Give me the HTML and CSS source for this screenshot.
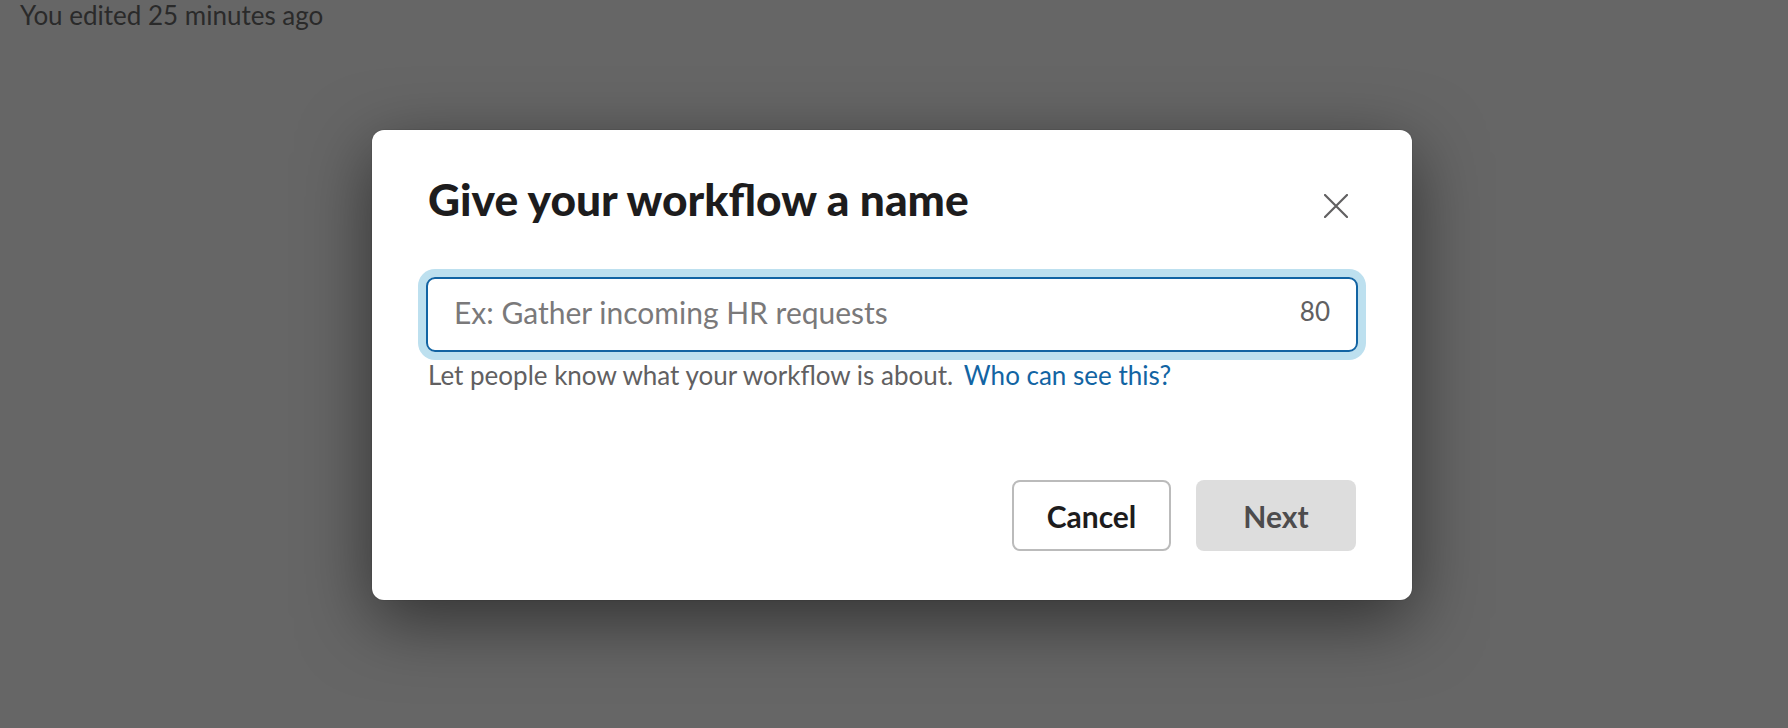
FILE: index.html
```html
<!DOCTYPE html>
<html lang="en">
<head>
<meta charset="utf-8">
<title>Give your workflow a name</title>
<link rel="stylesheet" href="styles.css">
</head>
<body>
<div class="page">
  <div class="edited">You edited 25 minutes ago</div>
</div>
<div class="overlay">
  <div class="modal" role="dialog" aria-labelledby="modal-title">
    <div class="modal-header">
      <h1 class="modal-title" id="modal-title">Give your workflow a name</h1>
      <button class="close-btn" type="button" aria-label="Close">
        <svg width="24" height="24" viewBox="0 0 24 24" aria-hidden="true">
          <path d="M1 1 L23 23 M23 1 L1 23" stroke="#616061" stroke-width="2.2" stroke-linecap="round" fill="none"/>
        </svg>
      </button>
    </div>
    <div class="field">
      <input class="field-input" type="text" placeholder="Ex: Gather incoming HR requests">
      <span class="field-count">80</span>
    </div>
    <p class="hint">Let people know what your workflow is about. <a class="hint-link" href="#">Who can see this?</a></p>
    <div class="modal-footer">
      <button class="btn btn-secondary" type="button">Cancel</button>
      <button class="btn btn-disabled" type="button">Next</button>
    </div>
  </div>
</div>
</body>
</html>
```

FILE: styles.css
```css
html, body {
  margin: 0;
  padding: 0;
}

body {
  width: 1788px;
  height: 728px;
  overflow: hidden;
  background: #666666;
  font-family: Lato, "Noto Sans", "Liberation Sans", sans-serif;
  position: relative;
}

.page {
  height: 728px;
}

.edited {
  padding: 0 0 0 20px;
  font-size: 26px;
  line-height: 31px;
  color: #2a2a2a;
}

.overlay {
  position: absolute;
  inset: 0;
  display: flex;
  align-items: center;
  justify-content: center;
  padding: 2px 4px 0 0;
}

.modal {
  width: 1040px;
  box-sizing: border-box;
  background: #ffffff;
  border-radius: 12px;
  padding: 43px 54px 49px;
  box-shadow: 0 0 0 1px rgba(0, 0, 0, 0.06), 0 20px 70px rgba(0, 0, 0, 0.52);
}

.modal-header {
  display: flex;
  align-items: flex-start;
  justify-content: space-between;
}

.modal-title {
  margin: 0 0 0 2px;
  font-size: 44.3px;
  line-height: 52px;
  font-weight: 900;
  color: #1d1c1d;
}

.close-btn {
  width: 44px;
  height: 44px;
  margin-top: 11px;
  padding: 0;
  border: none;
  background: transparent;
  display: flex;
  align-items: center;
  justify-content: center;
  cursor: pointer;
}

.field {
  margin-top: 49px;
  height: 75px;
  box-sizing: border-box;
  display: flex;
  align-items: center;
  border: 2px solid #1264a3;
  border-radius: 9px;
  box-shadow: 0 0 0 8px #bde0ef;
  padding: 0 26px 5px 26px;
}

.field-input {
  flex: 1;
  min-width: 0;
  height: 36px;
  border: none;
  outline: none;
  padding: 0;
  margin: 0;
  background: transparent;
  font-family: inherit;
  font-size: 30px;
  line-height: 36px;
  color: #1d1c1d;
}

.field-input::placeholder {
  color: #7a797a;
  opacity: 1;
}

.field-count {
  font-size: 26px;
  color: #616061;
  margin-bottom: 2px;
}

.hint {
  margin: 8px 0 0 2px;
  font-size: 26px;
  line-height: 30px;
  color: #616061;
}

.hint-link {
  color: #1264a3;
  text-decoration: none;
  margin-left: 4px;
}

.modal-footer {
  margin-top: 90px;
  padding-right: 2px;
  display: flex;
  justify-content: flex-end;
  gap: 25px;
}

.btn {
  height: 71px;
  width: 160px;
  border-radius: 8px;
  font-family: inherit;
  font-size: 30px;
  font-weight: 700;
  padding: 0;
  cursor: pointer;
}

.btn-secondary {
  width: 159px;
  background: #ffffff;
  border: 2px solid #bbbbbb;
  color: #1d1c1d;
}

.btn-disabled {
  background: #dddddd;
  border: none;
  color: #4d4c4d;
}
```
